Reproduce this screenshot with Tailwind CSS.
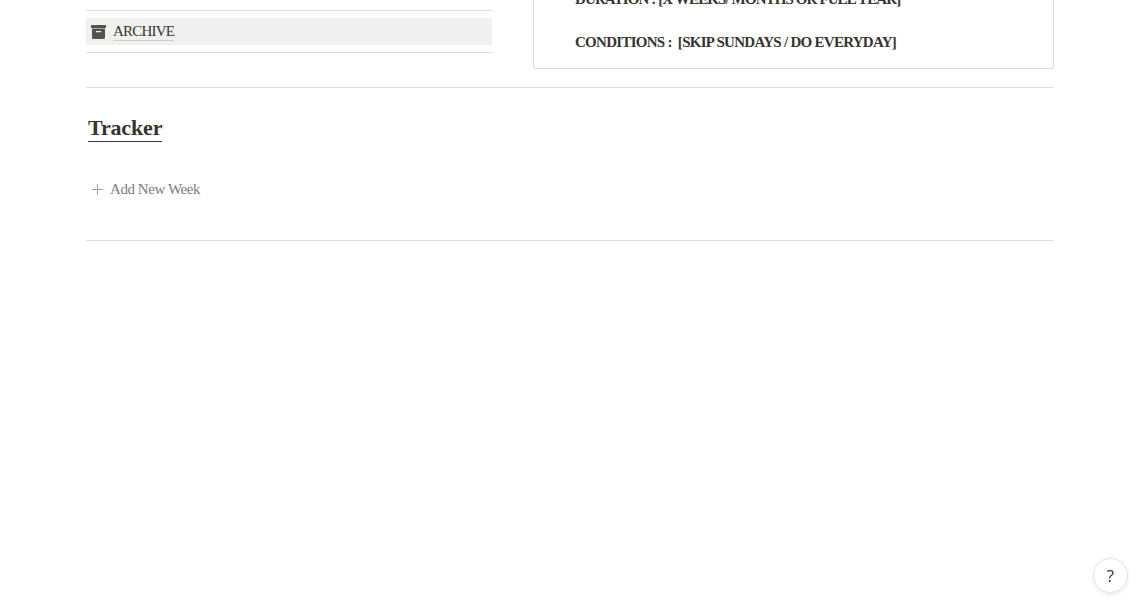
<!DOCTYPE html>
<html lang="en">
<head>
  <meta charset="UTF-8" />
  <meta name="viewport" content="width=device-width, initial-scale=1.0" />
  <title>Tracker</title>
  <script src="https://cdn.jsdelivr.net/npm/@tailwindcss/browser@4"></script>
</head>
<body class="h-screen overflow-hidden bg-white font-['Liberation_Serif',serif] text-[#37352f]">

  <main class="ml-[86px] w-[968px]">
    <div class="flex h-[69px] justify-between">

      <!-- Links -->
      <div class="w-[406px] pt-[10px]">
        <div class="border-y border-[#dededd] py-[7px]">
          <a href="#" class="flex h-[27px] items-center bg-[#f0f0ee] pl-[5px]">
            <svg class="h-[14px] w-[15px] shrink-0" viewBox="0 0 15 14" fill="#55534f">
              <path d="M.5 0h14q.5 0 .5.5v2q0 .5-.5.5H.5Q0 3 0 2.500v-2Q0 0 .5 0z" />
              <path fill-rule="evenodd" d="M1 3.500h13v9q0 1.500-1.500 1.500h-10Q1 14 1 12.500zM5 6v1.200h5V6z" />
            </svg>
            <span class="ml-[7px] h-[19px] w-[61px] border-b border-[#d0d0ce] text-[15px] leading-[18px] tracking-[-0.8px] whitespace-nowrap">ARCHIVE</span>
          </a>
        </div>
      </div>

      <!-- Challenge details -->
      <div class="flex w-[521px] flex-col justify-end gap-[19px] overflow-hidden rounded-b-[3px] border border-t-0 border-[#dededd] pb-[14px] pl-[41px] text-[15px] leading-6 font-bold whitespace-pre">
        <p class="tracking-[-0.89px]">DURATION : [X WEEKS/ MONTHS OR FULL YEAR]</p>
        <p class="tracking-[-0.72px]">CONDITIONS :  [SKIP SUNDAYS / DO EVERYDAY]</p>
      </div>
    </div>

    <!-- Tracker -->
    <section class="mt-[18px] h-[154px] border-y border-[#dededd] pt-[26px]">
      <h2 class="ml-[2px] h-[28px] w-[74px] border-b border-[#37352f] text-[22px] leading-[28px] font-bold tracking-[-0.15px] whitespace-nowrap">Tracker</h2>
      <button class="mt-[35px] ml-[6px] flex h-[24px] items-center text-[15px] text-[#7d7c78]">
        <svg class="h-[11px] w-[11px]" viewBox="0 0 11 11" stroke="#a3a29f" fill="none">
          <path d="M5.500 0v11M0 5.500h11" />
        </svg>
        <span class="ml-[7px] tracking-[-0.43px] whitespace-nowrap">Add New Week</span>
      </button>
    </section>
  </main>

  <!-- Help -->
  <button class="fixed right-[9px] bottom-[21px] flex size-[35px] items-center justify-center rounded-full border border-[#e3e3e2] bg-white font-['Open_Sans',sans-serif] text-[17px] shadow-[0_2px_4px_rgba(15,15,15,0.08)]">?</button>

</body>
</html>
